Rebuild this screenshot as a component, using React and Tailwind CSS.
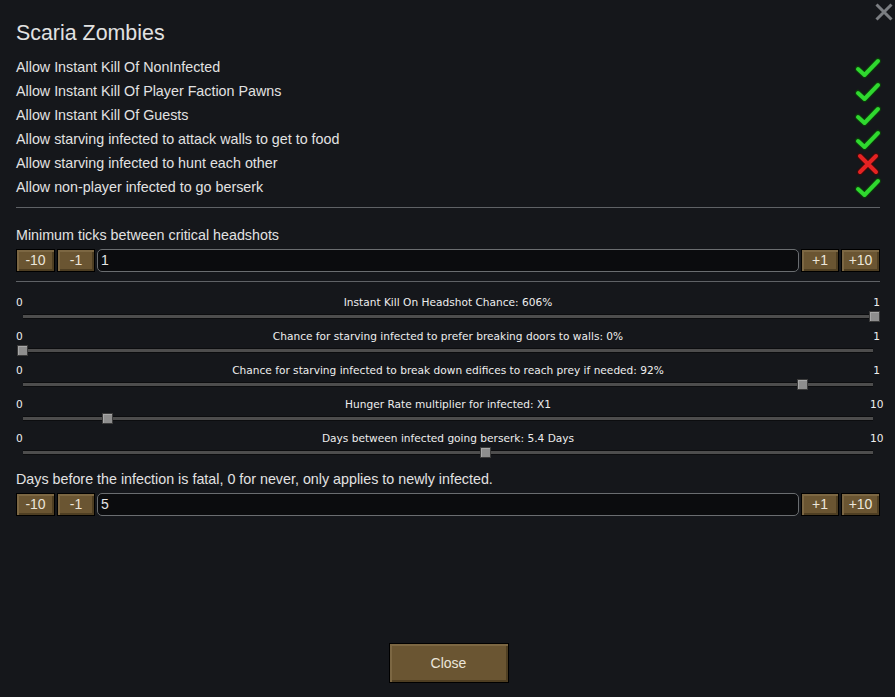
const toggles = [
  { label: "Allow Instant Kill Of NonInfected", on: true },
  { label: "Allow Instant Kill Of Player Faction Pawns", on: true },
  { label: "Allow Instant Kill Of Guests", on: true },
  { label: "Allow starving infected to attack walls to get to food", on: true },
  { label: "Allow starving infected to hunt each other", on: false },
  { label: "Allow non-player infected to go berserk", on: true },
];

const sliders = [
  { label: "Instant Kill On Headshot Chance: 606%", min: "0", max: "1", pos: 853 },
  { label: "Chance for starving infected to prefer breaking doors to walls: 0%", min: "0", max: "1", pos: 1 },
  { label: "Chance for starving infected to break down edifices to reach prey if needed: 92%", min: "0", max: "1", pos: 781 },
  { label: "Hunger Rate multiplier for infected: X1", min: "0", max: "10", pos: 86 },
  { label: "Days between infected going berserk: 5.4 Days", min: "0", max: "10", pos: 464 },
];

function Check() {
  return (
    <svg width="26" height="22" viewBox="0 0 26 22">
      <path d="M3 12 L9.5 18 L23 4" fill="none" stroke="#0c3a0c" strokeWidth="6.4" strokeLinecap="round" strokeLinejoin="round" />
      <path d="M3 12 L9.5 18 L23 4" fill="none" stroke="#2fd82f" strokeWidth="4" strokeLinecap="round" strokeLinejoin="round" />
    </svg>
  );
}

function Cross() {
  return (
    <svg width="26" height="22" viewBox="0 0 26 22">
      <path d="M5 3 L21 19 M21 3 L5 19" fill="none" stroke="#3a0c0c" strokeWidth="6.4" strokeLinecap="round" />
      <path d="M5 3 L21 19 M21 3 L5 19" fill="none" stroke="#e52222" strokeWidth="4" strokeLinecap="round" />
    </svg>
  );
}

function WoodButton({ children, className = "" }) {
  return (
    <button className={`flex items-center justify-center border border-black bg-[#6a5532] text-[14px] text-[#ece6da] shadow-[inset_2px_2px_0_#7c6743,inset_-2px_-2px_0_#4e3e22] ${className}`}>
      {children}
    </button>
  );
}

function NumberRow({ value }) {
  return (
    <div className="flex h-[23px] gap-[2px]">
      <WoodButton className="w-[39px]">-10</WoodButton>
      <WoodButton className="w-[38px]">-1</WoodButton>
      <div className="flex flex-1 items-center rounded-[5px] border border-[#6a6d70] bg-[#0b0c0e] px-[3px] text-[14px] text-[#e4e4e4]">
        {value}
      </div>
      <WoodButton className="w-[38px]">+1</WoodButton>
      <WoodButton className="w-[39px]">+10</WoodButton>
    </div>
  );
}

function Slider({ label, min, max, pos }) {
  return (
    <div className="h-[34px]">
      <div className="flex h-[15px] items-center justify-between font-['DejaVu_Sans',sans-serif] text-[10.6px] text-[#eeeeee]">
        <span className="w-[10px]">{min}</span>
        <span>{label}</span>
        <span className="w-[10px] text-right">{max}</span>
      </div>
      <div className="relative h-[19px]">
        <div className="absolute left-[7px] right-[7px] top-[4px] h-[5px] border-y border-[#0c0d0f] bg-[#4d4d4d]" />
        <div
          className="absolute top-[1px] h-[11px] w-[11px] border border-[#3b3b3b] bg-[#8e8e8e] shadow-[inset_1px_1px_0_#a8a8a8]"
          style={{ left: pos }}
        />
      </div>
    </div>
  );
}

export default function App() {
  return (
    <div className="relative flex h-[697px] w-[895px] flex-col bg-[#15171b] pl-[16px] pr-[15px] pt-[21px] pb-[14px] font-['Liberation_Sans',Arial,sans-serif] text-[#e2e2e2]">
      <svg className="absolute right-[2px] top-[3px]" width="18" height="18" viewBox="0 0 18 18">
        <path d="M1.5 1.5 L16.5 16.5 M16.5 1.5 L1.5 16.5" stroke="#7b7e82" strokeWidth="3" />
      </svg>

      <h1 className="h-[24px] text-[21.4px] leading-[24px]">Scaria Zombies</h1>

      <div className="mt-[11px] flex flex-col">
        {toggles.map((t) => (
          <div key={t.label} className="flex h-[24px] items-center justify-between text-[14.3px]">
            <span>{t.label}</span>
            <span className="-mr-[1px] -mt-[1px]">{t.on ? <Check /> : <Cross />}</span>
          </div>
        ))}
      </div>

      <div className="mt-[7px] h-px bg-[#5f6266]" />

      <div className="mt-[18px] flex h-[20px] items-center text-[14.3px]">
        Minimum ticks between critical headshots
      </div>
      <div className="mt-[3px]">
        <NumberRow value="1" />
      </div>

      <div className="mt-[9px] h-px bg-[#5f6266]" />

      <div className="mt-[13px] flex flex-col">
        {sliders.map((s) => (
          <Slider key={s.label} {...s} />
        ))}
      </div>

      <div className="mt-[5px] flex h-[20px] items-center text-[14.3px]">
        Days before the infection is fatal, 0 for never, only applies to newly infected.
      </div>
      <div className="mt-[3px]">
        <NumberRow value="5" />
      </div>

      <div className="mt-auto flex justify-center">
        <WoodButton className="ml-[1px] h-[40px] w-[120px]">Close</WoodButton>
      </div>
    </div>
  );
}
